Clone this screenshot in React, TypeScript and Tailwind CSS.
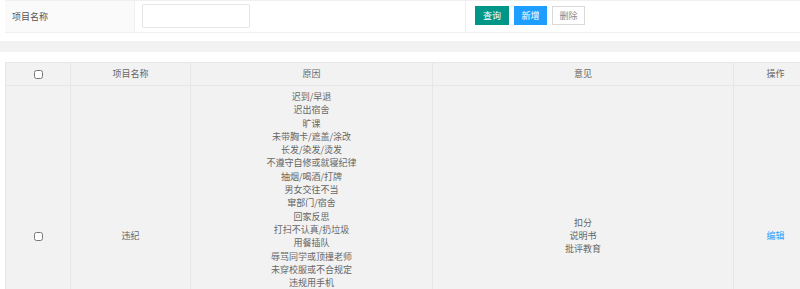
const reasons = [
  '迟到/早退',
  '迟出宿舍',
  '旷课',
  '未带胸卡/遮盖/涂改',
  '长发/染发/烫发',
  '不遵守自修或就寝纪律',
  '抽烟/喝酒/打牌',
  '男女交往不当',
  '窜部门/宿舍',
  '回家反思',
  '打扫不认真/扔垃圾',
  '用餐插队',
  '辱骂同学或顶撞老师',
  '未穿校服或不合规定',
  '违规用手机',
];

const opinions = ['扣分', '说明书', '批评教育'];

export default function App() {
  return (
    <div
      className="w-[800px] h-[289px] overflow-hidden bg-white text-[9px] text-[#666]"
      style={{ fontFamily: '"Noto Sans CJK SC", "Noto Sans", sans-serif' }}
    >
      {/* search bar */}
      <div className="ml-[5px] w-[830px] h-[33px] flex border-t border-b border-[#f0f0f0]">
        <div className="w-[130px] shrink-0 bg-[#fafafa] border-r border-[#eeeeee] flex items-center pl-[7px] text-[#555]">
          项目名称
        </div>
        <div className="w-[331px] shrink-0 border-r border-[#eeeeee] pl-[7px] pt-[3px]">
          <input className="w-[108px] h-[24px] border border-[#e6e6e6] rounded-[2px] outline-none px-2" />
        </div>
        <div className="flex gap-[5px] pl-[9px] pt-[5px]">
          <button className="w-[34px] h-[19px] bg-[#009688] text-white leading-[19px]">查询</button>
          <button className="w-[33px] h-[19px] bg-[#1e9fff] text-white leading-[19px]">新增</button>
          <button className="w-[33px] h-[19px] bg-white border border-[#d9d9d9] text-[#888] leading-[17px]">删除</button>
        </div>
      </div>

      <div className="mt-[8px] h-[11px] bg-[#f2f2f2]" />

      {/* table */}
      <table className="mt-[10px] ml-[5px] w-[812px] table-fixed border-collapse bg-[#f2f2f2]">
        <colgroup>
          <col className="w-[65px]" />
          <col className="w-[120px]" />
          <col className="w-[242px]" />
          <col className="w-[301px]" />
          <col className="w-[84px]" />
        </colgroup>
        <thead>
          <tr className="h-[23px]">
            <th className="border border-[#e6e6e6] font-normal">
              <input type="checkbox" className="w-[9px] h-[9px] align-middle" />
            </th>
            <th className="border border-[#e6e6e6] font-normal">项目名称</th>
            <th className="border border-[#e6e6e6] font-normal">原因</th>
            <th className="border border-[#e6e6e6] font-normal">意见</th>
            <th className="border border-[#e6e6e6] font-normal">操作</th>
          </tr>
        </thead>
        <tbody>
          <tr className="h-[300px]">
            <td className="border border-[#e6e6e6] text-center align-middle">
              <input type="checkbox" className="w-[9px] h-[9px] align-middle" />
            </td>
            <td className="border border-[#e6e6e6] text-center align-middle">违纪</td>
            <td className="border border-[#e6e6e6] text-center align-top pt-[4px] leading-[13.3px]">
              {reasons.map((r) => (
                <div key={r}>{r}</div>
              ))}
            </td>
            <td className="border border-[#e6e6e6] text-center align-middle leading-[13.3px]">
              {opinions.map((o) => (
                <div key={o}>{o}</div>
              ))}
            </td>
            <td className="border border-[#e6e6e6] text-center align-middle">
              <a className="text-[#1e9fff] cursor-pointer">编辑</a>
            </td>
          </tr>
        </tbody>
      </table>
    </div>
  );
}
